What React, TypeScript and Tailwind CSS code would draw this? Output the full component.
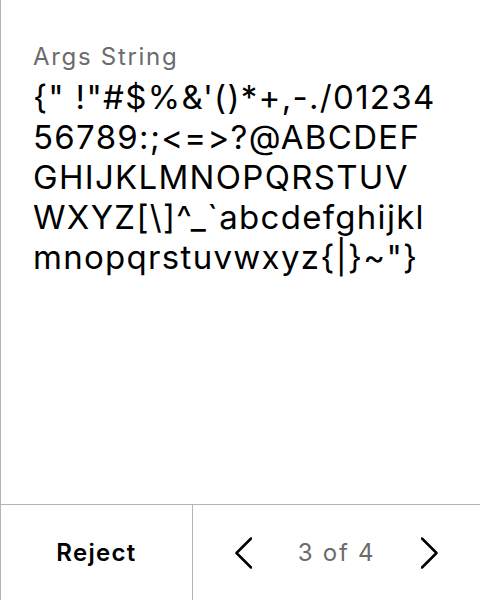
import React from "react";

const lines = [
  `{" !"#$%&'()*+,-./01234`,
  `56789:;<=>?@ABCDEF`,
  `GHIJKLMNOPQRSTUV`,
  "WXYZ[\\]^_`abcdefghijkl",
  `mnopqrstuvwxyz{|}~"}`,
];

export default function App() {
  return (
    <div
      className="w-[480px] h-[600px] flex flex-col bg-white border-l border-[#b4b4b4] text-black [font-feature-settings:'calt'_0,'liga'_0]"
      style={{ fontFamily: "Inter, 'Noto Sans', sans-serif" }}
    >
      <div className="flex-1 px-8 pt-[41px]">
        <div className="text-[24px] leading-8 tracking-[1.7px] text-[#6b6b6b]">Args String</div>
        <div className="mt-1 text-[33px] leading-10 tracking-[1.3px] whitespace-nowrap">
          {lines.map((l, i) => (
            <div key={i}>{l}</div>
          ))}
        </div>
      </div>
      <div className="h-[96px] flex border-t border-[#b4b4b4]">
        <div className="w-[192px] flex items-center justify-center border-r border-[#b4b4b4]">
          <span className="text-[24px] font-semibold tracking-[1.3px]">Reject</span>
        </div>
        <div className="flex-1 flex items-center justify-between pl-[42px] pr-[42px]">
          <svg width="17" height="32" viewBox="0 0 17 32" fill="none" stroke="black" strokeWidth="2.5" strokeLinecap="round" strokeLinejoin="round">
            <polyline points="16,1.5 1.5,16 16,30.5" />
          </svg>
          <span className="text-[24px] tracking-[1.7px] text-[#6b6b6b]">3 of 4</span>
          <svg width="17" height="32" viewBox="0 0 17 32" fill="none" stroke="black" strokeWidth="2.5" strokeLinecap="round" strokeLinejoin="round">
            <polyline points="1,1.5 15.5,16 1,30.5" />
          </svg>
        </div>
      </div>
    </div>
  );
}
